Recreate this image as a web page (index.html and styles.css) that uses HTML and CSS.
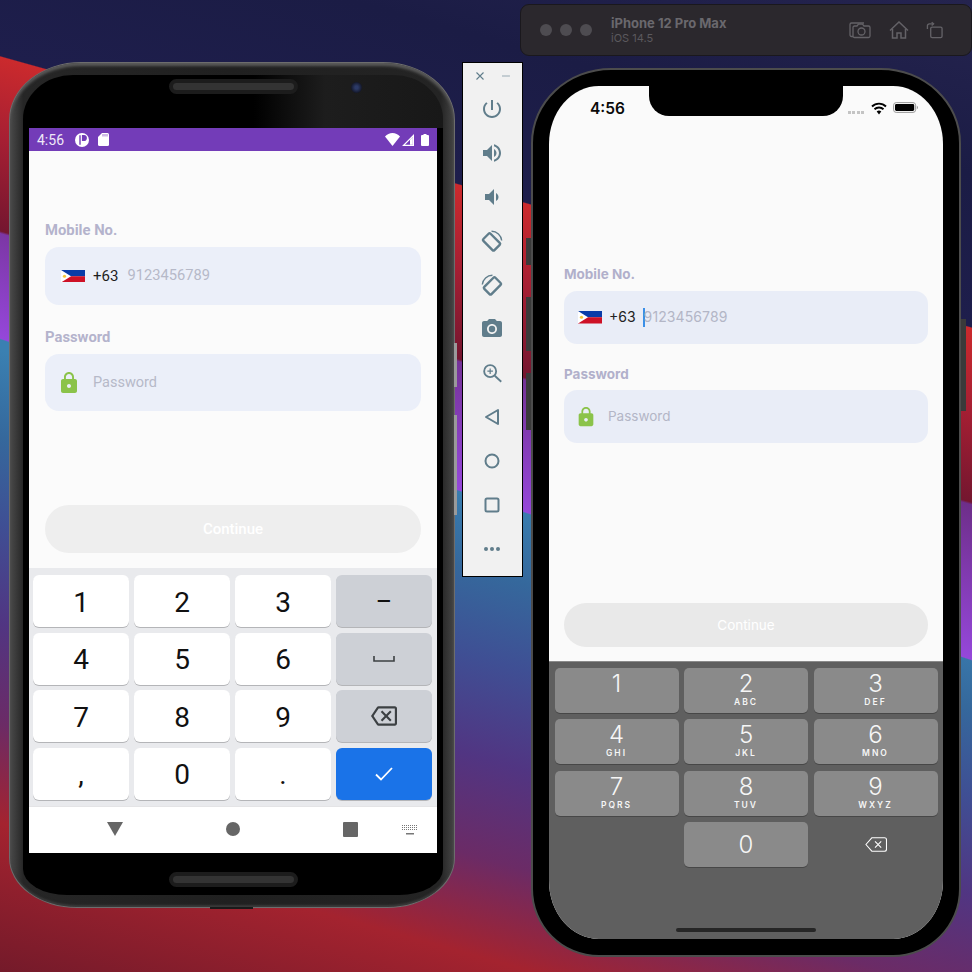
FILE: index.html
```html
<!DOCTYPE html>
<html lang="en">
<head>
    <meta charset="UTF-8">
    <meta name="viewport" content="width=device-width, initial-scale=1.0">
    <title>Emulator and simulator</title>
    <link rel="stylesheet" href="styles.css">
</head>
<body>
<div class="desktop">

    <!-- android emulator -->
    <div class="android">
        <span class="android-btn android-btn-a"></span>
        <span class="android-btn android-btn-b"></span>
        <span class="android-foot"></span>
        <div class="android-inner">
            <div class="speaker"></div>
            <span class="camera"></span>
            <div class="android-screen">
                <div class="a-status">
                    <span class="a-time">4:56</span>
                    <svg class="a-p" viewBox="0 0 14 14"><circle cx="7" cy="7" r="7" fill="#fff"/><path d="M5 2.200v9.600M7.600 2.600h1.200a2.400 2.400 0 0 1 0 4.800H7.600z" fill="#733cb8" stroke="#733cb8" stroke-width="1.400"/></svg>
                    <svg class="a-sd" viewBox="0 0 11 13"><path d="M4 0h5.500A1.500 1.500 0 0 1 11 1.500V11.500A1.500 1.500 0 0 1 9.500 13H1.500A1.500 1.500 0 0 1 0 11.500V4z" fill="#fff"/><path d="M5 1v2.500M7 1v2.500M9 1v2.500" stroke="#733cb8" stroke-width=".7"/></svg>
                    <span class="a-status-gap"></span>
                    <svg class="a-wifi" viewBox="0 0 15 13"><path d="M0 3.600C2 1.400 4.600 0 7.500 0S13 1.400 15 3.600L7.500 13z" fill="#fff"/></svg>
                    <svg class="a-cell" viewBox="0 0 12 12"><path d="M12 0v12H0zM10.800 3 3 10.800h7.800z" fill="#fff" fill-rule="evenodd"/><path d="M8 5.800 V10.800H10.800V3z" fill="#fff"/></svg>
                    <svg class="a-batt" viewBox="0 0 8 12"><path d="M2.500 0h3v1H7a1 1 0 0 1 1 1v9a1 1 0 0 1-1 1H1a1 1 0 0 1-1-1V2a1 1 0 0 1 1-1h1.500z" fill="#fff"/></svg>
                </div>
                <div class="a-form">
                    <label class="a-label a-label-first">Mobile No.</label>
                    <div class="a-field">
                        <svg class="flag a-flag" viewBox="0 0 24 12.500"><rect width="24" height="6.250" fill="#0a3ca8"/><rect y="6.250" width="24" height="6.250" fill="#ce1126"/><path d="M0 0 10 6.250 0 12.500z" fill="#fff"/><circle cx="3.500" cy="6.250" r="1.600" fill="#f5c93a"/></svg>
                        <span class="a-code">+63</span>
                        <span class="a-ph">9123456789</span>
                    </div>
                    <label class="a-label a-label-next">Password</label>
                    <div class="a-field a-field-pass">
                        <svg class="lock" viewBox="0 0 24 24"><path d="M18 8h-1V6c0-2.760-2.240-5-5-5S7 3.240 7 6v2H6c-1.100 0-2 .9-2 2v10c0 1.100.9 2 2 2h12c1.100 0 2-.9 2-2V10c0-1.100-.9-2-2-2zm-6 9c-1.100 0-2-.9-2-2s.9-2 2-2 2 .9 2 2-.9 2-2 2zm3.100-9H8.900V6c0-1.710 1.390-3.100 3.100-3.100 1.710 0 3.100 1.390 3.100 3.100v2z"/></svg>
                        <span class="a-ph a-ph-pass">Password</span>
                    </div>
                    <button class="a-continue" type="button">Continue</button>
                </div>
                <div class="a-keyboard">
                    <div class="a-key">1</div>
                    <div class="a-key">2</div>
                    <div class="a-key">3</div>
                    <div class="a-key a-key-side a-key-dash">–</div>
                    <div class="a-key">4</div>
                    <div class="a-key">5</div>
                    <div class="a-key">6</div>
                    <div class="a-key a-key-side">
                        <svg class="a-space" viewBox="0 0 22 6"><path d="M1 0v5h20V0" fill="none" stroke="#3c4043" stroke-width="1.600"/></svg>
                    </div>
                    <div class="a-key">7</div>
                    <div class="a-key">8</div>
                    <div class="a-key">9</div>
                    <div class="a-key a-key-side">
                        <svg class="a-back" viewBox="0 0 24 24"><path fill="#3c4043" d="M22 3H7c-.69 0-1.230.35-1.590.88L0 12l5.410 8.110c.36.53.9.89 1.590.89h15c1.100 0 2-.9 2-2V5c0-1.100-.9-2-2-2zm0 16H7.070L2.400 12l4.660-7H22v14zm-11.590-2L14 13.410 17.590 17 19 15.590 15.410 12 19 8.410 17.590 7 14 10.590 10.410 7 9 8.410 12.590 12 9 15.590z"/></svg>
                    </div>
                    <div class="a-key">,</div>
                    <div class="a-key">0</div>
                    <div class="a-key">.</div>
                    <div class="a-key a-key-done">
                        <svg class="a-check" viewBox="0 0 18 14"><path d="M1 7.500 6 12.500 17 1" fill="none" stroke="#fff" stroke-width="1.800"/></svg>
                    </div>
                </div>
                <div class="a-nav">
                    <span class="nav-tri"></span>
                    <span class="nav-dot"></span>
                    <span class="nav-sq"></span>
                    <svg class="nav-kb" viewBox="0 0 16 10"><path d="M0 .5h16M0 2.500h16M0 4.500h16" stroke="#777" stroke-width="1" stroke-dasharray="1 1" fill="none"/><rect x="4" y="8" width="8" height="1.500" fill="#777"/></svg>
                </div>
            </div>
            <div class="speaker speaker-low"></div>
        </div>
    </div>

    <!-- emulator side toolbar -->
    <div class="toolbar">
        <div class="toolbar-top">
            <svg class="tb-small" viewBox="0 0 10 10"><path d="M1.500 1.500l7 7M8.500 1.500l-7 7" stroke="#607d8b" stroke-width="1.100"/></svg>
            <svg class="tb-small" viewBox="0 0 10 10"><path d="M1 5h8" stroke="#9fb0b8" stroke-width="1.100"/></svg>
        </div>
        <div class="tb-item"><svg class="tb-icon" viewBox="0 0 24 24"><path d="M13 3h-2v10h2V3zm4.830 2.170l-1.420 1.420C17.990 7.860 19 9.810 19 12c0 3.870-3.130 7-7 7s-7-3.130-7-7c0-2.190 1.010-4.140 2.580-5.420L6.170 5.170C4.230 6.820 3 9.260 3 12c0 4.970 4.030 9 9 9s9-4.030 9-9c0-2.740-1.230-5.180-3.170-6.830z"/></svg></div>
        <div class="tb-item"><svg class="tb-icon" viewBox="0 0 24 24"><path d="M3 9v6h4l5 5V4L7 9H3zm13.500 3c0-1.770-1.020-3.290-2.500-4.030v8.050c1.480-.73 2.500-2.250 2.500-4.020zM14 3.230v2.060c2.890.86 5 3.540 5 6.710s-2.110 5.850-5 6.710v2.060c4.010-.91 7-4.490 7-8.770s-2.990-7.860-7-8.770z"/></svg></div>
        <div class="tb-item"><svg class="tb-icon" viewBox="0 0 24 24"><path d="M18.500 12c0-1.770-1.020-3.290-2.500-4.030v8.050c1.480-.73 2.500-2.250 2.500-4.020zM5 9v6h4l5 5V4L9 9H5z"/></svg></div>
        <div class="tb-item"><svg class="tb-icon" viewBox="-1 -1 26 26"><rect x="6" y="4.500" width="11" height="17" rx="1.500" transform="rotate(-45 11.500 13)" fill="none" stroke="#607d8b" stroke-width="2.600"/><path d="M11.500 1.500a11 11 0 0 1 11 10" fill="none" stroke="#607d8b" stroke-width="1.500"/></svg></div>
        <div class="tb-item"><svg class="tb-icon" viewBox="-1 -1 26 26"><rect x="7" y="4.500" width="11" height="17" rx="1.500" transform="rotate(45 12.500 13)" fill="none" stroke="#607d8b" stroke-width="2.600"/><path d="M12.500 1.500a11 11 0 0 0-11 10" fill="none" stroke="#607d8b" stroke-width="1.500"/></svg></div>
        <div class="tb-item"><svg class="tb-icon" viewBox="0 0 24 24"><path fill-rule="evenodd" d="M9 2L7.170 4H4c-1.100 0-2 .9-2 2v12c0 1.100.9 2 2 2h16c1.100 0 2-.9 2-2V6c0-1.100-.9-2-2-2h-3.170L15 2H9zm3 15c-2.760 0-5-2.240-5-5s2.240-5 5-5 5 2.240 5 5-2.240 5-5 5z"/><circle cx="12" cy="12" r="3.200"/></svg></div>
        <div class="tb-item"><svg class="tb-icon" viewBox="-1 -1 26 26"><g fill="none" stroke="#607d8b" stroke-width="2"><circle cx="10" cy="10" r="6.500"/><path d="M15 15l7 6.500"/><path d="M10 7v6M7 10h6" stroke-width="1.300"/></g></svg></div>
        <div class="tb-item"><svg class="tb-icon" viewBox="0 0 24 24"><path d="M18 5v14L6 12z" fill="none" stroke="#607d8b" stroke-width="2" stroke-linejoin="round"/></svg></div>
        <div class="tb-item"><svg class="tb-icon" viewBox="0 0 24 24"><circle cx="12" cy="12" r="6.500" fill="none" stroke="#607d8b" stroke-width="2"/></svg></div>
        <div class="tb-item"><svg class="tb-icon" viewBox="0 0 24 24"><rect x="5.500" y="5.500" width="13" height="13" rx="1.500" fill="none" stroke="#607d8b" stroke-width="2"/></svg></div>
        <div class="tb-item"><svg class="tb-icon" viewBox="0 0 24 24"><circle cx="6" cy="12" r="2"/><circle cx="12" cy="12" r="2"/><circle cx="18" cy="12" r="2"/></svg></div>
    </div>

    <!-- ios simulator title bar -->
    <div class="sim-bar">
        <div class="sim-dots"><span></span><span></span><span></span></div>
        <div class="sim-title">
            <div class="sim-name">iPhone 12 Pro Max</div>
            <div class="sim-os">iOS 14.5</div>
        </div>
        <div class="sim-icons">
            <svg class="sim-cam" viewBox="0 0 22 18"><g fill="none" stroke="#646267" stroke-width="1.300"><path d="M4 15.500H2.500A1.500 1.500 0 0 1 1 14V3.500A1.500 1.500 0 0 1 2.500 2H15"/><path d="M5.500 5H8l1.500-1.800h4L15 5h4.500A1.500 1.500 0 0 1 21 6.500V15a1.500 1.500 0 0 1-1.500 1.500h-14A1.500 1.500 0 0 1 4 15V6.500A1.500 1.500 0 0 1 5.500 5z"/><circle cx="12.500" cy="10.500" r="3.500"/></g></svg>
            <svg class="sim-home" viewBox="0 0 20 18"><g fill="none" stroke="#646267" stroke-width="1.500"><path d="M1 9.500 10 1l9 8.500"/><path d="M3.500 8v9h4.500v-5h4v5h4.500V8"/></g></svg>
            <svg class="sim-rot" viewBox="0 0 18 18"><g fill="none" stroke="#646267" stroke-width="1.400"><rect x="5" y="6" width="12" height="11" rx="1.500"/><path d="M1.500 8V4.500A2 2 0 0 1 3.500 2.500H8"/><path d="M6 .8 8 2.500 6 4.200"/></g></svg>
        </div>
    </div>

    <!-- iphone -->
    <div class="iphone">
        <span class="side-btn side-a"></span>
        <span class="side-btn side-b"></span>
        <span class="side-btn side-c"></span>
        <span class="side-btn side-d"></span>
        <div class="i-screen">
            <div class="notch"></div>
            <div class="i-status">
                <span class="i-time">4:56</span>
                <span class="i-status-gap"></span>
                <span class="i-signal"></span>
                <svg class="i-wifi" viewBox="0 0 16 13"><g fill="none" stroke="#000" stroke-width="1.900"><path d="M1 4.500a10 10 0 0 1 14 0"/><path d="M3.500 7.300a6.400 6.400 0 0 1 9 0"/></g><path d="M5.700 9.600a3.200 3.200 0 0 1 4.600 0L8 12.500z" fill="#000"/></svg>
                <svg class="i-batt" viewBox="0 0 25 11"><rect x=".6" y=".6" width="22" height="9.800" rx="2.600" fill="none" stroke="#999" stroke-width="1"/><rect x="2" y="2" width="19.200" height="7" rx="1.400" fill="#000"/><path d="M23.800 3.800c.8.300 1.200.9 1.200 1.700s-.4 1.400-1.200 1.700z" fill="#999"/></svg>
            </div>
            <div class="i-form">
                <label class="i-label i-label-first">Mobile No.</label>
                <div class="i-field i-field-phone">
                    <svg class="flag i-flag" viewBox="0 0 24 12.500"><rect width="24" height="6.250" fill="#0a3ca8"/><rect y="6.250" width="24" height="6.250" fill="#ce1126"/><path d="M0 0 10 6.250 0 12.500z" fill="#fff"/><circle cx="3.500" cy="6.250" r="1.600" fill="#f5c93a"/></svg>
                    <span class="i-code">+63</span>
                    <span class="caret"></span>
                    <span class="i-ph">9123456789</span>
                </div>
                <label class="i-label i-label-next">Password</label>
                <div class="i-field i-field-pass">
                    <svg class="lock i-lock" viewBox="0 0 24 24"><path d="M18 8h-1V6c0-2.760-2.240-5-5-5S7 3.240 7 6v2H6c-1.100 0-2 .9-2 2v10c0 1.100.9 2 2 2h12c1.100 0 2-.9 2-2V10c0-1.100-.9-2-2-2zm-6 9c-1.100 0-2-.9-2-2s.9-2 2-2 2 .9 2 2-.9 2-2 2zm3.100-9H8.900V6c0-1.710 1.390-3.100 3.100-3.100 1.710 0 3.100 1.390 3.100 3.100v2z"/></svg>
                    <span class="i-ph i-ph-pass">Password</span>
                </div>
                <button class="i-continue" type="button">Continue</button>
            </div>
            <div class="i-keyboard">
                <div class="i-keys">
                    <div class="i-key"><span class="i-num">1</span></div>
                    <div class="i-key"><span class="i-num">2</span><span class="i-sub">ABC</span></div>
                    <div class="i-key"><span class="i-num">3</span><span class="i-sub">DEF</span></div>
                    <div class="i-key"><span class="i-num">4</span><span class="i-sub">GHI</span></div>
                    <div class="i-key"><span class="i-num">5</span><span class="i-sub">JKL</span></div>
                    <div class="i-key"><span class="i-num">6</span><span class="i-sub">MNO</span></div>
                    <div class="i-key"><span class="i-num">7</span><span class="i-sub">PQRS</span></div>
                    <div class="i-key"><span class="i-num">8</span><span class="i-sub">TUV</span></div>
                    <div class="i-key"><span class="i-num">9</span><span class="i-sub">WXYZ</span></div>
                    <div class="i-key i-key-blank"></div>
                    <div class="i-key i-key-zero"><span class="i-num">0</span></div>
                    <div class="i-key i-key-blank">
                        <svg class="i-back" viewBox="0 0 22 15"><path d="M7 .7h12.500a2 2 0 0 1 2 2v9.600a2 2 0 0 1-2 2H7L.9 7.500z" fill="none" stroke="#fff" stroke-width="1.100" stroke-linejoin="round"/><path d="M10 4.300l6.200 6.400M16.200 4.300 10 10.700" stroke="#fff" stroke-width="1.100"/></svg>
                    </div>
                </div>
                <div class="home-bar"></div>
            </div>
        </div>
    </div>

</div>
</body>
</html>
```

FILE: styles.css
```css
* {
    box-sizing: border-box;
}
body {
    margin: 0;
    background: #1e1e4a;
}
svg {
    display: block;
    flex: none;
}
button {
    border: none;
    padding: 0;
}
.desktop {
    position: relative;
    width: 972px;
    height: 972px;
    overflow: hidden;
    background:
        linear-gradient(195.6deg, #25244f 0, #1b1c45 14%, #1e1e4c 26.3%, transparent 26.4%),
        linear-gradient(195.6deg, #cb2a2d 26.4%, #a61f33 33%, #74162f 40.4%, transparent 40.6%),
        linear-gradient(198.3deg, #6a2c82 38%, #7f39ac 44%, #9547da 51%, transparent 51.1%),
        linear-gradient(195.6deg, #3a80b2 50%, #35689c 57%, #3f4f94 64%, #513582 72%, #6b2b66 80%, #a4232f 88%, #741a2a 100%);
}

/* android */
.android {
    position: absolute;
    left: 9px;
    top: 62px;
    width: 446px;
    height: 846px;
    padding: 12px 11px 12px 13px;
    border: 1px solid #6d6d6d;
    border-radius: 72px 72px 68px 68px / 58px 58px 50px 50px;
    background: linear-gradient(90deg, #4a4a4a, #262626 3%, #202020 50%, #242424 97%, #444);
    box-shadow: inset 0 3px 3px #5a5a5a, inset 0 -2px 2px #3a3a3a;
}
.android-btn {
    position: absolute;
    left: 444px;
    width: 3px;
    background: #9a9a9a;
}
.android-btn-a {
    top: 280px;
    height: 44px;
}
.android-btn-b {
    top: 352px;
    height: 100px;
}
.android-foot {
    position: absolute;
    left: 200px;
    bottom: -2px;
    width: 43px;
    height: 2px;
    background: #1a1a1a;
}
.android-inner {
    position: relative;
    height: 100%;
    display: flex;
    flex-direction: column;
    align-items: center;
    padding-top: 4px;
    border-radius: 50px 50px 44px 44px / 44px 44px 26px 26px;
    background: linear-gradient(90deg, #000 55%, #1d1d1d 72%, #181818) no-repeat top / 100% 53px, #000;
}
.speaker {
    width: 129px;
    height: 15px;
    border: 4px solid #1c1c1c;
    border-radius: 8px;
    background: #333;
}
.speaker-low {
    margin-top: 19px;
}
.camera {
    position: absolute;
    left: 328px;
    top: 7px;
    width: 11px;
    height: 11px;
    border-radius: 50%;
    background: radial-gradient(circle, #2c3a66 20%, #14182a 70%);
}
.android-screen {
    width: 408px;
    height: 725px;
    margin-top: 34px;
    display: flex;
    flex-direction: column;
    background: #fbfbfb;
    font-family: Roboto, sans-serif;
}
.a-status {
    height: 23px;
    display: flex;
    align-items: center;
    padding: 0 8px;
    background: #733cb8;
    color: #efe8f7;
    font-size: 14px;
}
.a-time {
    width: 38px;
}
.a-p {
    width: 14px;
    height: 14px;
}
.a-sd {
    width: 11px;
    height: 13px;
    margin-left: 9px;
}
.a-status-gap {
    flex: 1;
}
.a-wifi {
    width: 15px;
    height: 13px;
}
.a-cell {
    width: 12px;
    height: 12px;
    margin-left: 2px;
}
.a-batt {
    width: 8px;
    height: 12px;
    margin-left: 7px;
}
.a-form {
    flex: 1;
    display: flex;
    flex-direction: column;
    padding: 0 16px 15px;
}
.a-label {
    height: 16px;
    line-height: 16px;
    font-size: 14.800px;
    font-weight: 700;
    color: #b4b3cc;
}
.a-label-first {
    margin-top: 71px;
}
.a-label-next {
    margin-top: 24px;
}
.a-field {
    height: 58px;
    margin-top: 9px;
    display: flex;
    align-items: center;
    padding-left: 16px;
    border-radius: 14px;
    background: #ebeff9;
}
.a-field-pass {
    height: 57px;
    padding-left: 12px;
}
.a-flag {
    width: 24px;
    height: 12.500px;
}
.a-code {
    margin-left: 8px;
    font-size: 15px;
    color: #1e1e1e;
}
.a-ph {
    margin: -2px 0 0 9px;
    font-size: 14.700px;
    color: #b6b9c8;
}
.a-ph-pass {
    margin: 0 0 0 12px;
    font-size: 14.500px;
}
.lock {
    width: 24px;
    height: 24px;
    fill: #8bc34a;
}
.a-continue {
    height: 48px;
    margin-top: auto;
    border-radius: 24px;
    background: #eeeeee;
    color: #fff;
    font-family: Roboto, sans-serif;
    font-size: 15px;
    font-weight: 500;
}
.a-keyboard {
    height: 238px;
    flex: none;
    display: grid;
    grid-template-columns: repeat(4, 96px);
    grid-auto-rows: 52px;
    gap: 5.500px 5px;
    padding: 7px 0 0 4px;
    background: #e9eaed;
}
.a-key {
    display: flex;
    align-items: center;
    justify-content: center;
    padding-top: 2px;
    border-radius: 6px;
    background: #fff;
    box-shadow: 0 1px 0 #b4b5b8;
    font-size: 28px;
    color: #111;
}
.a-key-side {
    padding-top: 0;
    background: #cdd0d6;
}
.a-key-dash {
    font-size: 25px;
}
.a-key-done {
    padding-top: 0;
    background: #1a73e8;
}
.a-space {
    width: 22px;
    height: 6px;
}
.a-back {
    width: 26px;
    height: 26px;
}
.a-check {
    width: 18px;
    height: 14px;
}
.a-nav {
    height: 47px;
    flex: none;
    display: flex;
    align-items: flex-start;
    gap: 103px;
    padding: 15px 0 0 78px;
    background: #fff;
    border-top: 1px solid #e4e4e6;
}
.nav-tri {
    width: 0;
    height: 0;
    border-left: 8px solid transparent;
    border-right: 8px solid transparent;
    border-top: 14px solid #666;
}
.nav-dot {
    width: 14px;
    height: 14px;
    border-radius: 50%;
    background: #666;
}
.nav-sq {
    width: 15px;
    height: 15px;
    border-radius: 1px;
    background: #666;
}
.nav-kb {
    width: 16px;
    height: 10px;
    margin: 3px 0 0 -59px;
}

/* side toolbar */
.toolbar {
    position: absolute;
    left: 462px;
    top: 62px;
    width: 61px;
    height: 515px;
    border: 1px solid #000;
    background: #f1f1f1;
}
.toolbar-top {
    display: flex;
    justify-content: space-between;
    height: 24px;
    padding: 8px 11px 0 12px;
}
.tb-small {
    width: 10px;
    height: 10px;
}
.tb-item {
    height: 44px;
    display: flex;
    align-items: center;
    justify-content: center;
    padding-right: 2px;
}
.tb-icon {
    width: 24px;
    height: 24px;
    fill: #607d8b;
}

/* simulator bar */
.sim-bar {
    position: absolute;
    left: 520px;
    top: 4px;
    width: 452px;
    height: 52px;
    display: flex;
    align-items: center;
    padding: 0 28px 0 19px;
    border-radius: 9px;
    border: 1px solid #1a181d;
    background: #2b282d;
    font-family: Inter, sans-serif;
}
.sim-dots {
    display: flex;
    gap: 8px;
}
.sim-dots span {
    width: 12px;
    height: 12px;
    border-radius: 50%;
    background: #4e4c51;
}
.sim-title {
    margin-left: 19px;
}
.sim-name {
    font-size: 13px;
    font-weight: 700;
    line-height: 15px;
    color: #6a686d;
}
.sim-os {
    font-size: 11px;
    line-height: 14px;
    color: #5b595e;
}
.sim-icons {
    margin-left: auto;
    display: flex;
    align-items: center;
    gap: 17px;
}
.sim-cam {
    width: 22px;
    height: 18px;
    margin-right: 1px;
}
.sim-home {
    width: 20px;
    height: 18px;
}
.sim-rot {
    width: 17px;
    height: 18px;
}

/* iphone */
.iphone {
    position: absolute;
    left: 531px;
    top: 68px;
    width: 430px;
    height: 889px;
    padding: 16px;
    border: 2px solid #4c4c4c;
    border-radius: 80px 80px 68px 68px / 75px 75px 68px 68px;
    background: #000;
}
.side-btn {
    position: absolute;
    width: 5px;
    background: #3a3a3a;
}
.side-a {
    left: -7px;
    top: 168px;
    height: 27px;
}
.side-b {
    left: -7px;
    top: 227px;
    height: 54px;
}
.side-c {
    left: -7px;
    top: 303px;
    height: 57px;
}
.side-d {
    left: 428px;
    top: 249px;
    height: 92px;
}
.i-screen {
    position: relative;
    height: 100%;
    display: flex;
    flex-direction: column;
    border-radius: 50px / 58px;
    overflow: hidden;
    background: #fafafa;
    font-family: Inter, sans-serif;
}
.notch {
    position: absolute;
    left: 100px;
    top: 0;
    width: 194px;
    height: 30px;
    border-radius: 0 0 20px 20px;
    background: #000;
}
.i-status {
    height: 44px;
    display: flex;
    align-items: flex-start;
    padding: 13px 25px 0 41px;
}
.i-time {
    font-size: 15.500px;
    font-weight: 600;
    line-height: 19px;
    color: #0a0a0a;
}
.i-status-gap {
    flex: 1;
}
.i-signal {
    width: 17px;
    height: 3px;
    margin-top: 12px;
    background: repeating-linear-gradient(90deg, #c4c4c4 0 3px, transparent 3px 4.500px);
}
.i-wifi {
    width: 16px;
    height: 13px;
    margin: 3px 0 0 6px;
}
.i-batt {
    width: 25px;
    height: 11px;
    margin: 3px 0 0 6px;
}
.i-form {
    flex: 1;
    display: flex;
    flex-direction: column;
    padding: 0 15px 14px;
}
.i-label {
    height: 16px;
    line-height: 16px;
    font-size: 13.500px;
    font-weight: 700;
    color: #b1b0cb;
}
.i-label-first {
    margin-top: 136px;
}
.i-label-next {
    margin-top: 22px;
}
.i-field {
    height: 53px;
    margin-top: 8px;
    display: flex;
    align-items: center;
    padding-left: 14px;
    border-radius: 13px;
    background: #e9edf7;
}
.i-field-phone {
    margin-top: 9px;
}
.i-field-pass {
    padding-left: 11px;
}
.i-flag {
    width: 24px;
    height: 12.500px;
}
.i-code {
    margin: -2px 0 0 7px;
    font-size: 14px;
    color: #222;
}
.caret {
    width: 2px;
    height: 19px;
    margin: -1px 0 0 7px;
    background: #3b8fe8;
}
.i-ph {
    margin: -2px 0 0 -1px;
    font-size: 14px;
    letter-spacing: .1px;
    color: #b3b6c6;
}
.i-ph-pass {
    margin: -2px 0 0 11px;
    font-size: 13.500px;
    letter-spacing: 0;
}
.i-lock {
    width: 22px;
    height: 22px;
}
.i-continue {
    height: 44px;
    margin-top: auto;
    border-radius: 22px;
    background: #e9e9e9;
    color: #fff;
    font-family: Inter, sans-serif;
    font-size: 13.500px;
}
.i-keyboard {
    height: 278px;
    flex: none;
    display: flex;
    flex-direction: column;
    border-top: 1px solid #8a8a8a;
    background: #5f5f5f;
}
.i-keys {
    display: grid;
    grid-template-columns: repeat(3, 124px);
    grid-auto-rows: 45px;
    gap: 6.500px 5.500px;
    padding: 5.500px 0 0 5.500px;
}
.i-key {
    display: flex;
    flex-direction: column;
    align-items: center;
    padding-top: 2px;
    border-radius: 5px;
    background: #8a8a8a;
    box-shadow: 0 1px 0 #474747;
    color: #f6f6f6;
}
.i-key-blank {
    background: none;
    box-shadow: none;
    justify-content: center;
    padding-top: 0;
}
.i-key-zero {
    justify-content: center;
    padding-top: 0;
}
.i-num {
    height: 28px;
    line-height: 28px;
    font-size: 24px;
    font-weight: 300;
}
.i-sub {
    height: 10px;
    line-height: 10px;
    margin-top: -1px;
    font-size: 8.500px;
    font-weight: 600;
    letter-spacing: 2px;
}
.i-back {
    width: 22px;
    height: 15px;
}
.home-bar {
    width: 140px;
    height: 4.500px;
    margin: auto auto 7px;
    border-radius: 3px;
    background: #262626;
}
```
